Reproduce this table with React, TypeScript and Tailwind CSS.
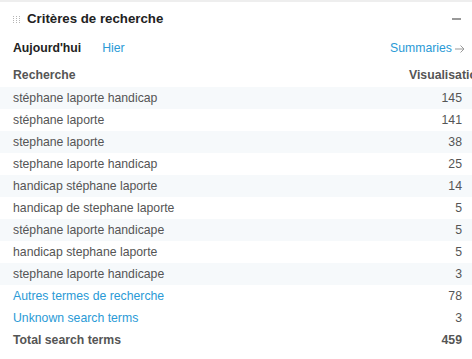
import React from "react";

const rows: [string, number][] = [
  ["stéphane laporte handicap", 145],
  ["stéphane laporte", 141],
  ["stephane laporte", 38],
  ["stephane laporte handicap", 25],
  ["handicap stéphane laporte", 14],
  ["handicap de stephane laporte", 5],
  ["stéphane laporte handicape", 5],
  ["handicap stephane laporte", 5],
  ["stephane laporte handicape", 3],
];

function Grip() {
  return (
    <svg width="7" height="9" viewBox="0 0 7 9" className="mr-[7px]" shapeRendering="crispEdges">
      {[0, 1, 2, 3].map((r) =>
        [0, 1, 2].map((c) => (
          <rect key={`${r}-${c}`} x={c * 3} y={r * 2 + 1} width="1" height="1" fill="#b5b5b5" />
        ))
      )}
    </svg>
  );
}

export default function App() {
  return (
    <div
      className="w-[472px] h-[359px] overflow-hidden bg-white text-[12.25px] text-[#555]"
      style={{ fontFamily: '"Liberation Sans", Arial, sans-serif' }}
    >
      <div className="h-[2px] bg-[#eeeeee]" />
      <div className="h-[1px]" />
      <div className="flex items-center h-[32px] pl-[13px] pr-[11px]">
        <Grip />
        <span className="text-[13.25px] font-bold text-[#222]">Critères de recherche</span>
        <span className="ml-auto block w-[9px] h-[2px] bg-[#999]" />
      </div>
      <div className="flex items-center h-[27px] pl-[13px] pr-[7px]">
        <span className="font-bold text-[#222]">Aujourd'hui</span>
        <span className="ml-[21px] text-[#2a9ad6]">Hier</span>
        <span className="ml-auto text-[#2a9ad6] flex items-center">
          Summaries
          <svg width="10" height="8" viewBox="0 0 10 8" className="ml-[3px]">
            <path d="M0 4h9M5.5 0.5L9 4L5.5 7.5" stroke="#999" strokeWidth="1" fill="none" />
          </svg>
        </span>
      </div>
      <div className="flex items-center h-[25px] pt-[2px] pl-[13px] font-bold text-[#555] whitespace-nowrap">
        <span>Recherche</span>
        <span className="ml-auto w-[63px] shrink-0">Visualisations</span>
      </div>
      {rows.map(([label, n], i) => (
        <div
          key={label}
          className={`flex items-center h-[22px] pl-[13px] pr-[10px] ${i % 2 === 0 ? "bg-[#f6f9fb]" : "bg-white"}`}
        >
          <span>{label}</span>
          <span className="ml-auto">{n}</span>
        </div>
      ))}
      <div className="flex items-center h-[22px] pl-[13px] pr-[10px]">
        <span className="text-[#2a9ad6]">Autres termes de recherche</span>
        <span className="ml-auto">78</span>
      </div>
      <div className="flex items-center h-[22px] pl-[13px] pr-[10px]">
        <span className="text-[#2a9ad6]">Unknown search terms</span>
        <span className="ml-auto">3</span>
      </div>
      <div className="flex items-center h-[22px] pl-[13px] pr-[10px] font-bold">
        <span>Total search terms</span>
        <span className="ml-auto">459</span>
      </div>
    </div>
  );
}
